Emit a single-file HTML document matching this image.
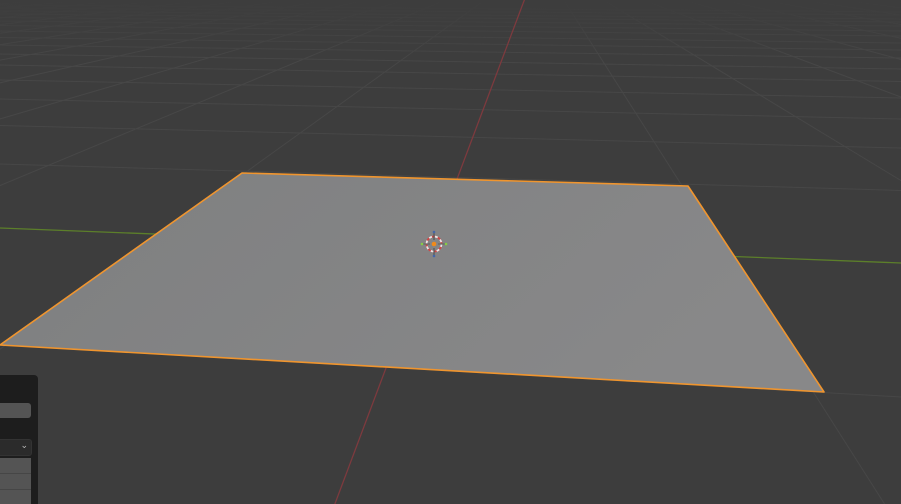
<!DOCTYPE html>
<html><head><style>
html,body{margin:0;padding:0;background:#3d3d3d;width:901px;height:504px;overflow:hidden;position:relative}
svg{position:absolute;left:0;top:0;display:block;overflow:hidden}
.pn{position:absolute;left:0;top:375px;width:38px;height:129px;background:#1d1d1d;border-top-right-radius:4px;overflow:hidden}
</style></head><body>
<svg width="901" height="504" viewBox="0 0 901 504">
<defs>
<linearGradient id="fade" x1="0" y1="0" x2="0" y2="1"><stop offset="0" stop-color="#3d3d3d" stop-opacity="1"/><stop offset="0.12" stop-color="#3d3d3d" stop-opacity="0"/></linearGradient>
<linearGradient id="pl" x1="0" y1="0" x2="1" y2="0.3"><stop offset="0" stop-color="#7e7f80"/><stop offset="1" stop-color="#888889"/></linearGradient>
</defs>
<rect width="901" height="504" fill="#3d3d3d"/>
<g stroke="#474747" stroke-width="1" fill="none">
<line x1="0" y1="345" x2="901" y2="397"/>
<line x1="0" y1="164" x2="901" y2="190.5"/>
<line x1="0" y1="125.5" x2="901" y2="148"/>
<line x1="0" y1="99" x2="901" y2="119"/>
<line x1="0" y1="80" x2="901" y2="98"/>
<line x1="0" y1="65" x2="901" y2="81.5"/>
<line x1="0" y1="54" x2="901" y2="69"/>
<line x1="0" y1="45" x2="901" y2="58"/>
<line x1="0" y1="37.5" x2="901" y2="50"/>
<line x1="0" y1="31" x2="901" y2="43"/>
<line x1="0" y1="25.5" x2="901" y2="36"/>
<line x1="0" y1="21" x2="901" y2="31"/>
<line x1="0" y1="17.5" x2="901" y2="26"/>
<line x1="0" y1="14" x2="901" y2="22"/>
<line x1="0" y1="11" x2="901" y2="19"/>
<line x1="0" y1="8" x2="901" y2="15"/>
<line x1="0" y1="5" x2="901" y2="12"/>
<line x1="539" y1="-39" x2="-14752" y2="1182"/>
<line x1="539" y1="-39" x2="-13516" y2="1182"/>
<line x1="539" y1="-39" x2="-12280" y2="1182"/>
<line x1="539" y1="-39" x2="-11044" y2="1182"/>
<line x1="539" y1="-39" x2="-9808" y2="1182"/>
<line x1="539" y1="-39" x2="-8572" y2="1182"/>
<line x1="539" y1="-39" x2="-7336" y2="1182"/>
<line x1="539" y1="-39" x2="-6100" y2="1182"/>
<line x1="539" y1="-39" x2="-4864" y2="1182"/>
<line x1="539" y1="-39" x2="-3628" y2="1182"/>
<line x1="539" y1="-39" x2="-2392" y2="1182"/>
<line x1="539" y1="-39" x2="-1156" y2="1182"/>
<line x1="539" y1="-39" x2="1316" y2="1182"/>
<line x1="539" y1="-39" x2="2552" y2="1182"/>
<line x1="539" y1="-39" x2="3788" y2="1182"/>
<line x1="539" y1="-39" x2="5024" y2="1182"/>
<line x1="539" y1="-39" x2="6260" y2="1182"/>
<line x1="539" y1="-39" x2="7496" y2="1182"/>
<line x1="539" y1="-39" x2="8732" y2="1182"/>
<line x1="539" y1="-39" x2="9968" y2="1182"/>
<line x1="539" y1="-39" x2="11204" y2="1182"/>
<line x1="539" y1="-39" x2="12440" y2="1182"/>
<line x1="539" y1="-39" x2="13676" y2="1182"/>
<line x1="539" y1="-39" x2="14912" y2="1182"/>
</g>
<rect width="901" height="504" fill="url(#fade)"/>
<line x1="0" y1="228" x2="901" y2="263" stroke="#5c7f2a" stroke-width="1.3"/>
<line x1="539" y1="-39" x2="80" y2="1182" stroke="#7d3a3e" stroke-width="1.3"/>
<polygon points="242,173 688,186 824,392 0,345" fill="url(#pl)" stroke="#f0952e" stroke-width="1.6" stroke-linejoin="round"/>
<g transform="translate(434,244)">
<circle r="7.5" fill="none" stroke="#d04444" stroke-width="1.8"/>
<circle r="7.5" fill="none" stroke="#e8e8e8" stroke-width="1.8" stroke-dasharray="3 3"/>
<line x1="-13" y1="0" x2="-4" y2="0" stroke="#666" stroke-width="1.2"/>
<line x1="4" y1="0" x2="13" y2="0" stroke="#666" stroke-width="1.2"/>
<line x1="0" y1="-13" x2="0" y2="-4" stroke="#555" stroke-width="1.2"/>
<line x1="0" y1="4" x2="0" y2="13" stroke="#555" stroke-width="1.2"/>
<circle cx="-12" cy="0" r="1.3" fill="#8c4"/><circle cx="12" cy="0" r="1.3" fill="#8c4"/>
<circle cx="0" cy="-12" r="1.3" fill="#46a"/><circle cx="0" cy="12" r="1.3" fill="#46a"/>
<circle r="2.3" fill="#f08a1a"/>
</g>
</svg>
<div class="pn">
<div style="position:absolute;left:0;top:28px;width:31px;height:15px;background:#545454;border-radius:0 3px 3px 0"></div>
<div style="position:absolute;left:0;top:64px;width:32px;height:17px;background:#2b2b2b;border-radius:0 3px 3px 0;border:1px solid #333;border-left:none;box-sizing:border-box;overflow:hidden"><span style="position:absolute;right:3px;top:0px;color:#bbb;font:9px/12px 'DejaVu Sans',sans-serif">&#8964;</span></div>
<div style="position:absolute;left:0;top:83px;width:31px;height:15px;background:#545454;border-bottom:1px solid #464646"></div>
<div style="position:absolute;left:0;top:99px;width:31px;height:15px;background:#545454;border-bottom:1px solid #464646"></div>
<div style="position:absolute;left:0;top:115px;width:31px;height:14px;background:#545454"></div>
</div>
</body></html>
